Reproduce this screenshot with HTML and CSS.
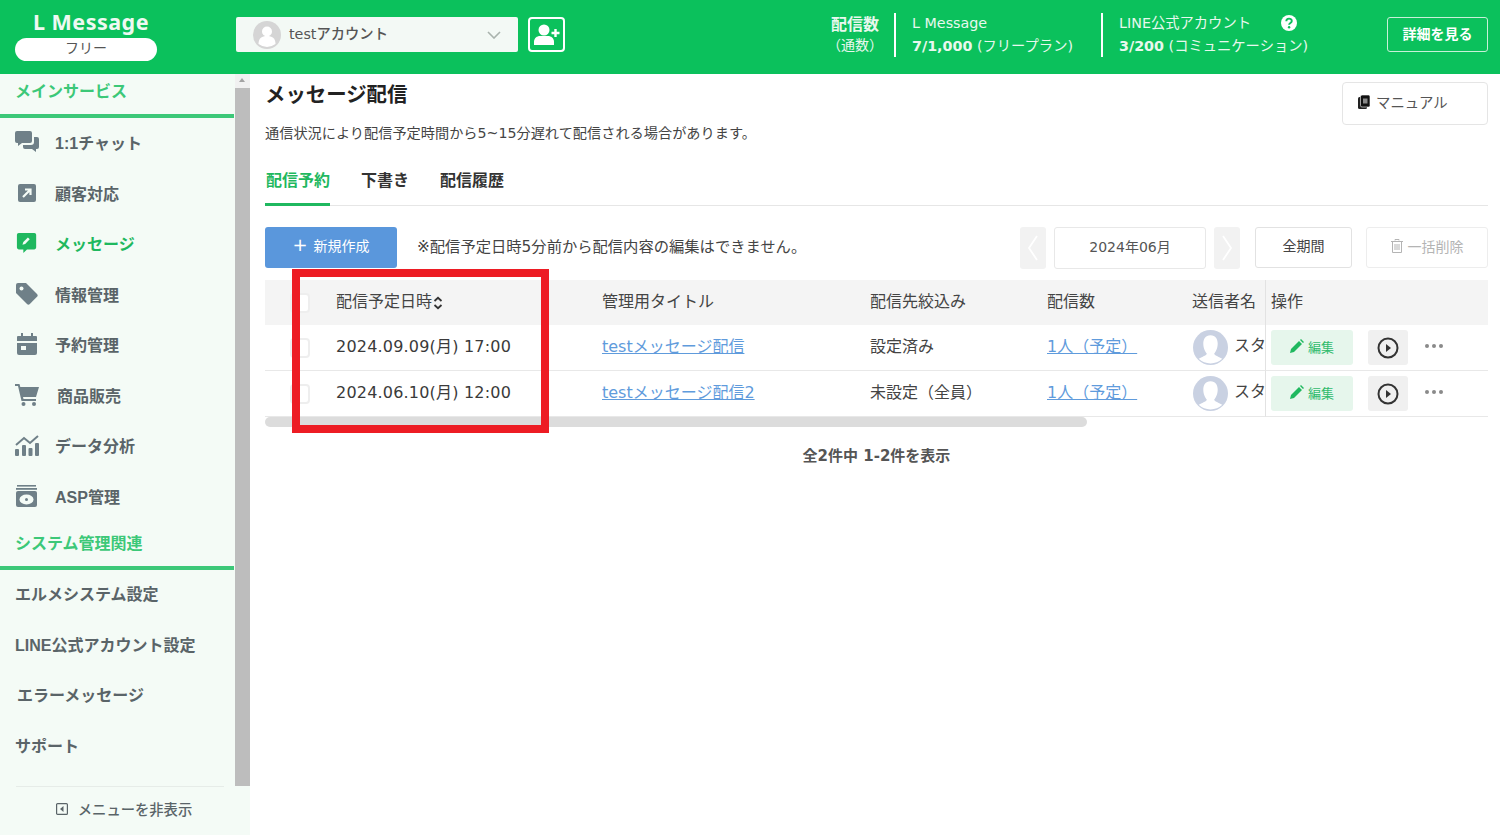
FILE: index.html
```html
<!DOCTYPE html>
<html lang="ja">
<head>
    <meta charset="UTF-8">
    <meta name="viewport" content="width=device-width, initial-scale=1.0">
    <title>メッセージ配信</title>
    <link rel="stylesheet" href="styles.css">
</head>
<body>

<header class="topbar">
    <div class="brand">
        <div class="brand-name">L Message</div>
        <div class="brand-plan">フリー</div>
    </div>
    <div class="account-select">
        <svg class="account-avatar" viewBox="0 0 28 28"><circle cx="14" cy="14" r="14" fill="#d5d5d5"/><circle cx="14" cy="10.5" r="5" fill="#fff"/><path d="M5.5 23c0-6 3.5-8 8.5-8s8.5 2 8.5 8a14 14 0 0 1-17 0z" fill="#fff"/></svg>
        <span class="account-name">testアカウント</span>
        <svg class="account-caret" viewBox="0 0 14 8"><path d="M1 1l6 6 6-6" fill="none" stroke="#a9b3ad" stroke-width="1.6"/></svg>
    </div>
    <div class="add-user">
        <svg viewBox="0 0 26 22" width="26" height="22"><circle cx="10" cy="6" r="5.5" fill="#fff"/><path d="M0 21v-3c0-4 3-6 6-6h8c3 0 6 2 6 6v3z" fill="#fff"/><path d="M21.5 5v8M17.5 9h8" stroke="#fff" stroke-width="2.4"/></svg>
    </div>
    <div class="stats">
        <div class="stat-label"><b>配信数</b><span>（通数）</span></div>
        <div class="stat stat-lm">
            <div>L Message</div>
            <div><b>7/1,000</b> (フリープラン)</div>
        </div>
        <div class="stat stat-line">
            <div class="stat-head">LINE公式アカウント
                <svg class="help" viewBox="0 0 16 16" width="16" height="16"><circle cx="8" cy="8" r="8" fill="#fff"/><path d="M5.3 6.2c0-3.4 5.5-3.4 5.5-.2 0 2-2.7 1.9-2.7 3.8" fill="none" stroke="#0bc15c" stroke-width="1.9"/><circle cx="8.1" cy="12.3" r="1.2" fill="#0bc15c"/></svg>
            </div>
            <div><b>3/200</b> (コミュニケーション)</div>
        </div>
    </div>
    <div class="detail-btn">詳細を見る</div>
</header>

<div class="layout">
    <aside class="sidebar">
        <div class="sidebar-body">
            <nav class="side-nav">
                <div class="side-section side-section-first">メインサービス</div>
                <div class="side-item">
                    <svg class="side-icon" viewBox="0 0 24 22"><path d="M2 0h13a2 2 0 0 1 2 2v8a2 2 0 0 1-2 2H7l-4 3v-3H2a2 2 0 0 1-2-2V2a2 2 0 0 1 2-2z"/><path d="M19 6h3a2 2 0 0 1 2 2v8a2 2 0 0 1-2 2h-1v3l-4-3H10a2 2 0 0 1-2-2v-2h8a3 3 0 0 0 3-3z"/></svg>
                    <span>1:1チャット</span>
                </div>
                <div class="side-item">
                    <svg class="side-icon" viewBox="0 0 22 22"><rect x="2" y="2" width="18" height="18" rx="2"/><path d="M7 15l7-7M9 7.5h5.5V13" fill="none" stroke="#f4fbf6" stroke-width="2.2"/></svg>
                    <span>顧客対応</span>
                </div>
                <div class="side-item side-item-active">
                    <svg class="side-icon" viewBox="0 0 22 24"><path d="M2 1h17a2 2 0 0 1 2 2v14a2 2 0 0 1-2 2h-8l-4 4v-4H2a2 2 0 0 1-2-2V3a2 2 0 0 1 2-2z"/><path d="M6 14l1-3 5-5 2 2-5 5z" fill="#f4fbf6"/></svg>
                    <span>メッセージ</span>
                </div>
                <div class="side-item">
                    <svg class="side-icon" viewBox="0 0 22 22"><path d="M0 2a2 2 0 0 1 2-2h8l11 11a2 2 0 0 1 0 2.8l-7.2 7.2a2 2 0 0 1-2.8 0L0 10z"/><circle cx="5.5" cy="5.5" r="2" fill="#f4fbf6"/></svg>
                    <span>情報管理</span>
                </div>
                <div class="side-item">
                    <svg class="side-icon" viewBox="0 0 22 22"><path d="M5 0h2v3h8V0h2v3h3a1 1 0 0 1 1 1v4H1V4a1 1 0 0 1 1-1h3z"/><path d="M1 10h20v10a2 2 0 0 1-2 2H3a2 2 0 0 1-2-2z"/><rect x="5" y="13" width="5" height="4" fill="#f4fbf6"/></svg>
                    <span>予約管理</span>
                </div>
                <div class="side-item side-item-shift">
                    <svg class="side-icon" viewBox="0 0 24 22"><path d="M0 0h4.5l.8 3H24l-3 10H8l.5 2H21v2H6.5L3 2H0z"/><circle cx="8.5" cy="20" r="2"/><circle cx="19" cy="20" r="2"/></svg>
                    <span>商品販売</span>
                </div>
                <div class="side-item">
                    <svg class="side-icon" viewBox="0 0 24 22"><rect x="0" y="15" width="4" height="7" rx="1"/><rect x="7" y="11" width="4" height="11" rx="1"/><rect x="13.5" y="14" width="4" height="8" rx="1"/><rect x="20" y="9" width="4" height="13" rx="1"/><path d="M1 11l8-7 6 5 8-7" fill="none" stroke="#6f8088" stroke-width="2"/></svg>
                    <span>データ分析</span>
                </div>
                <div class="side-item side-item-asp">
                    <svg class="side-icon" viewBox="0 0 22 22"><rect x="1" y="0" width="19" height="1.6"/><rect x="0" y="3" width="21" height="1.8"/><path d="M2 6h17a2 2 0 0 1 2 2v12a2 2 0 0 1-2 2H2a2 2 0 0 1-2-2V8a2 2 0 0 1 2-2z"/><ellipse cx="10.5" cy="14.5" rx="7" ry="5" fill="#f4fbf6"/><circle cx="10.5" cy="14.5" r="1.5"/></svg>
                    <span>ASP管理</span>
                </div>
                <div class="side-section">システム管理関連</div>
                <div class="side-item side-item-plain">エルメシステム設定</div>
                <div class="side-item side-item-plain">LINE公式アカウント設定</div>
                <div class="side-item side-item-plain side-item-err">エラーメッセージ</div>
                <div class="side-item side-item-plain">サポート</div>
            </nav>
            <div class="scrollbar-v">
                <div class="scrollbar-up"></div>
                <div class="scrollbar-thumb"></div>
            </div>
        </div>
        <div class="sidebar-foot">
            <div class="sidebar-foot-inner">
                <svg viewBox="0 0 12 12" width="12" height="12"><rect x=".6" y=".6" width="10.8" height="10.8" rx="1" fill="none" stroke="#5a6468" stroke-width="1.2"/><path d="M7.5 3v6L4 6z" fill="#5a6468"/></svg>
                <span>メニューを非表示</span>
            </div>
        </div>
    </aside>

    <main class="content">
        <div class="page-head">
            <div>
                <h1 class="page-title">メッセージ配信</h1>
                <p class="page-note">通信状況により配信予定時間から5~15分遅れて配信される場合があります。</p>
            </div>
            <div class="manual-btn">
                <svg viewBox="0 0 12 14" width="12" height="14"><rect x="0" y="2" width="9" height="12" rx="1.5" fill="#222"/><rect x="2.5" y="0" width="9.5" height="12" rx="1.5" fill="#111" stroke="#fff" stroke-width=".6"/><rect x="5" y="3.5" width="4.5" height="5" fill="#888"/></svg>
                <span>マニュアル</span>
            </div>
        </div>

        <div class="tabs">
            <div class="tab tab-active">配信予約</div>
            <div class="tab">下書き</div>
            <div class="tab">配信履歴</div>
        </div>

        <div class="toolbar">
            <div class="new-btn"><span class="new-plus">+</span>新規作成</div>
            <div class="toolbar-note">※配信予定日時5分前から配信内容の編集はできません。</div>
            <div class="toolbar-right">
                <div class="month-arrow">
                    <svg viewBox="0 0 12 30" width="12" height="30"><path d="M10 3L2 15l8 12" fill="none" stroke="#fff" stroke-width="1.8"/></svg>
                </div>
                <div class="month-box">2024年06月</div>
                <div class="month-arrow">
                    <svg viewBox="0 0 12 30" width="12" height="30"><path d="M2 3l8 12-8 12" fill="none" stroke="#fff" stroke-width="1.8"/></svg>
                </div>
                <div class="period-btn">全期間</div>
                <div class="bulk-btn">
                    <svg viewBox="0 0 12 14" width="12" height="14"><path d="M4 1.5V.5h4v1M0 2.5h12M1.5 2.5v11h9v-11M4 5v6M6 5v6M8 5v6" fill="none" stroke="#b4b4b4"/></svg>
                    <span>一括削除</span>
                </div>
            </div>
        </div>

        <div class="table-wrap">
            <table class="msg-table">
                <colgroup>
                    <col class="col-check"><col class="col-date"><col class="col-title"><col class="col-filter"><col class="col-count"><col class="col-sender"><col class="col-ops">
                </colgroup>
                <thead>
                    <tr>
                        <th><span class="check"></span></th>
                        <th>配信予定日時<svg class="sort" viewBox="0 0 10 14" width="10" height="14"><path d="M1.5 5L5 1.8 8.5 5M1.5 9L5 12.2 8.5 9" fill="none" stroke="#333" stroke-width="1.8"/></svg></th>
                        <th>管理用タイトル</th>
                        <th>配信先絞込み</th>
                        <th>配信数</th>
                        <th>送信者名</th>
                        <th class="ops-cell">操作</th>
                    </tr>
                </thead>
                <tbody>
                    <tr>
                        <td><span class="check"></span></td>
                        <td class="date-cell">2024.09.09(月) 17:00</td>
                        <td><a class="link">testメッセージ配信</a></td>
                        <td>設定済み</td>
                        <td><a class="link">1人（予定）</a></td>
                        <td>
                            <div class="sender">
                                <svg class="sender-avatar" viewBox="0 0 34 34"><circle cx="17" cy="17" r="17" fill="#c9d1e2"/><path d="M17 5c5 0 7 4 7 8 0 5-2 8-3.5 10 1 2 5 3 8 5a17 17 0 0 1-23 0c3-2 7-3 8-5C12 21 10 18 10 13c0-4 2-8 7-8z" fill="#fff"/></svg>
                                <span>スタ</span>
                            </div>
                        </td>
                        <td class="ops-cell">
                            <div class="ops">
                                <div class="edit-btn">
                                    <svg viewBox="0 0 14 14" width="14" height="14"><path d="M0 14l1-4 8-8 3 3-8 8zM10 1l1-1 3 3-1 1z" fill="#1fb85f"/></svg>
                                    <span>編集</span>
                                </div>
                                <div class="play-btn">
                                    <svg viewBox="0 0 22 22" width="22" height="22"><circle cx="11" cy="11" r="9.5" fill="none" stroke="#333" stroke-width="2"/><path d="M9 7l5 4-5 4z" fill="#333"/></svg>
                                </div>
                                <div class="more"><i></i><i></i><i></i></div>
                            </div>
                        </td>
                    </tr>
                    <tr>
                        <td><span class="check"></span></td>
                        <td class="date-cell">2024.06.10(月) 12:00</td>
                        <td><a class="link">testメッセージ配信2</a></td>
                        <td>未設定（全員）</td>
                        <td><a class="link">1人（予定）</a></td>
                        <td>
                            <div class="sender">
                                <svg class="sender-avatar" viewBox="0 0 34 34"><circle cx="17" cy="17" r="17" fill="#c9d1e2"/><path d="M17 5c5 0 7 4 7 8 0 5-2 8-3.5 10 1 2 5 3 8 5a17 17 0 0 1-23 0c3-2 7-3 8-5C12 21 10 18 10 13c0-4 2-8 7-8z" fill="#fff"/></svg>
                                <span>スタ</span>
                            </div>
                        </td>
                        <td class="ops-cell">
                            <div class="ops">
                                <div class="edit-btn">
                                    <svg viewBox="0 0 14 14" width="14" height="14"><path d="M0 14l1-4 8-8 3 3-8 8zM10 1l1-1 3 3-1 1z" fill="#1fb85f"/></svg>
                                    <span>編集</span>
                                </div>
                                <div class="play-btn">
                                    <svg viewBox="0 0 22 22" width="22" height="22"><circle cx="11" cy="11" r="9.5" fill="none" stroke="#333" stroke-width="2"/><path d="M9 7l5 4-5 4z" fill="#333"/></svg>
                                </div>
                                <div class="more"><i></i><i></i><i></i></div>
                            </div>
                        </td>
                    </tr>
                </tbody>
            </table>
            <div class="scrollbar-h"><div class="scrollbar-h-thumb"></div></div>
            <div class="red-box"></div>
        </div>

        <div class="table-count">全2件中 1-2件を表示</div>
    </main>
</div>

</body>
</html>
```

FILE: styles.css
```css
* {
    box-sizing: border-box;
}
body {
    margin: 0;
    height: 835px;
    overflow: hidden;
    font-family: "DejaVu Sans", "Noto Sans CJK JP", sans-serif;
    color: #333;
    background: #fff;
}

/* header */
.topbar {
    display: flex;
    align-items: center;
    height: 74px;
    padding-bottom: 5px;
    background: #0bc15c;
    color: #fff;
}
.brand {
    width: 142px;
    margin-left: 15px;
    margin-top: 5px;
    text-align: center;
}
.brand-name {
    padding-left: 10px;
    margin-top: -6px;
    font-family: "Noto Sans", sans-serif;
    font-size: 21.5px;
    font-weight: 700;
    line-height: 28px;
    color: #eef9f2;
    letter-spacing: .5px;
}
.brand-plan {
    height: 23px;
    margin-top: 2px;
    border-radius: 12px;
    background: #fff;
    color: #555;
    font-size: 14px;
    line-height: 20px;
}
.account-select {
    display: flex;
    align-items: center;
    width: 282px;
    height: 35px;
    margin-left: 79px;
    padding: 0 17px;
    border-radius: 2px;
    background: #f3f9f5;
    color: #555;
    font-size: 14.3px;
}
.account-avatar {
    width: 28px;
    height: 28px;
    flex: none;
}
.account-name {
    margin-left: 8px;
    margin-bottom: 4px;
    font-weight: 500;
}
.account-caret {
    width: 14px;
    height: 8px;
    margin-left: auto;
}
.add-user {
    display: flex;
    align-items: center;
    justify-content: center;
    width: 37px;
    height: 35px;
    margin-left: 10px;
    border: 2px solid #fff;
    border-radius: 4px;
}
.stats {
    display: flex;
    align-items: center;
    margin-left: 265px;
    font-size: 14.3px;
    color: #e8f8ee;
}
.stat-label {
    display: flex;
    flex-direction: column;
    align-items: center;
    width: 64px;
    padding-right: 14px;
    margin-top: 0;
    line-height: 21px;
}
.stat-label b {
    font-size: 16px;
}
.stat-label span {
    font-size: 14px;
    white-space: nowrap;
}
.stat {
    height: 44px;
    border-left: 2px solid #fff;
    padding-left: 16px;
    line-height: 23px;
    white-space: nowrap;
}
.stat > div:first-child {
    margin-top: -1px;
}
.stat-lm {
    width: 207px;
}
.stat-line {
    width: 285px;
}
.stat b {
    font-weight: 700;
}
.stat-head {
    display: flex;
    align-items: center;
    gap: 30px;
}
.help {
    flex: none;
}
.detail-btn {
    width: 101px;
    height: 35px;
    margin-left: auto;
    margin-right: 12px;
    border: 1px solid #c8f0d8;
    border-radius: 3px;
    text-align: center;
    font-size: 14px;
    font-weight: 700;
    line-height: 32px;
}

.layout {
    display: flex;
    height: 761px;
}

/* sidebar */
.sidebar {
    display: flex;
    flex-direction: column;
    flex: none;
    width: 250px;
    background: #f4fbf6;
}
.sidebar-body {
    display: flex;
    height: 712px;
}
.side-nav {
    flex: none;
    width: 234px;
    margin-right: 1px;
    font-family: "Liberation Sans", "Noto Sans CJK JP", sans-serif;
}
.side-section {
    height: 48px;
    padding: 10px 0 0 15px;
    border-bottom: 4px solid #3cc878;
    color: #3cc878;
    font-size: 16px;
    font-weight: 700;
    line-height: 24px;
}
.side-section-first {
    height: 44px;
    padding-top: 6px;
}
.side-item {
    display: flex;
    align-items: center;
    height: 50.5px;
    padding-left: 15px;
    padding-bottom: 2px;
    color: #5a6468;
    font-size: 16px;
    font-weight: 700;
}
.side-item > span {
    margin-left: 16px;
}
.side-icon {
    flex: none;
    width: 24px;
    height: 22px;
    fill: #6f8088;
}
.side-item-active {
    color: #1fb85f;
}
.side-item-active .side-icon {
    fill: #1fb85f;
}
.side-item-shift > span {
    margin-left: 18px;
}
.side-item-plain {
    padding-bottom: 4px;
}
.side-item-err {
    padding-left: 17px;
}
.scrollbar-v {
    flex: none;
    display: flex;
    flex-direction: column;
    width: 15px;
    background: #f1f1f1;
}
.scrollbar-up {
    height: 14px;
    position: relative;
}
.scrollbar-up::after {
    content: "";
    position: absolute;
    left: 4px;
    top: 4px;
    border-left: 3.5px solid transparent;
    border-right: 3.5px solid transparent;
    border-bottom: 4px solid #a3a3a3;
}
.scrollbar-thumb {
    flex: 1;
    background: #bdbdbd;
}
.sidebar-foot {
    flex: 1;
    padding: 0 26px 0 16px;
}
.sidebar-foot-inner {
    display: flex;
    align-items: center;
    justify-content: center;
    gap: 10px;
    height: 49px;
    padding-left: 8px;
    padding-bottom: 5px;
    border-top: 1px solid #e6ece8;
    color: #5a6468;
    font-size: 14.3px;
    font-weight: 500;
}

/* main column */
.content {
    flex: 1;
    min-width: 0;
    padding: 0 12px 0 15px;
}
.page-head {
    display: flex;
    justify-content: space-between;
    height: 84px;
}
.page-title {
    margin: 7px 0 0;
    color: #222;
    font-size: 20.4px;
    font-weight: 700;
    line-height: 29px;
}
.page-note {
    margin: 11px 0 0;
    color: #444;
    font-size: 14.2px;
    line-height: 24px;
}
.manual-btn {
    display: flex;
    align-items: center;
    gap: 6px;
    width: 146px;
    height: 43px;
    margin-top: 8px;
    padding-left: 15px;
    padding-bottom: 4px;
    border: 1px solid #e5e5e5;
    border-radius: 4px;
    color: #555;
    font-size: 14.4px;
}
.tabs {
    display: flex;
    gap: 31px;
    height: 48px;
    border-bottom: 1px solid #e6e6e6;
}
.tab {
    height: 48px;
    padding-top: 10px;
    color: #333;
    font-size: 16px;
    font-weight: 700;
    line-height: 26px;
}
.tab-active {
    border-bottom: 3px solid #1fb85f;
    color: #1fb85f;
    text-indent: 1px;
}
.toolbar {
    display: flex;
    align-items: center;
    height: 41px;
    margin-top: 21px;
}
.new-btn {
    width: 132px;
    height: 41px;
    border-radius: 3px;
    background: #5a97dc;
    color: #fff;
    text-align: center;
    font-size: 14px;
    line-height: 36px;
}
.new-plus {
    margin-right: 6px;
    font-size: 18px;
}
.toolbar-note {
    margin-left: 20px;
    margin-bottom: 5px;
    color: #444;
    font-size: 15.3px;
}
.toolbar-right {
    display: flex;
    align-items: center;
    margin-left: auto;
}
.month-arrow {
    display: flex;
    align-items: center;
    justify-content: center;
    width: 26px;
    height: 42px;
    border-radius: 3px;
    background: #f2f2f2;
}
.month-box {
    width: 152px;
    height: 42px;
    margin: 0 8px;
    border: 1px solid #e8e8e8;
    border-radius: 3px;
    color: #555;
    text-align: center;
    font-size: 14px;
    line-height: 38px;
}
.period-btn {
    width: 97px;
    height: 41px;
    margin-left: 15px;
    border: 1px solid #e2e2e2;
    border-radius: 3px;
    color: #444;
    text-align: center;
    font-size: 14px;
    line-height: 36px;
}
.bulk-btn {
    display: flex;
    align-items: center;
    justify-content: center;
    gap: 5px;
    width: 122px;
    height: 41px;
    margin-left: 14px;
    padding-bottom: 3px;
    border: 1px solid #ededed;
    border-radius: 3px;
    color: #b4b4b4;
    font-size: 14px;
}

/* table */
.table-wrap {
    position: relative;
    margin-top: 12px;
}
.msg-table {
    width: 100%;
    table-layout: fixed;
    border-collapse: separate;
    border-spacing: 0;
    font-size: 16px;
    color: #444;
}
.col-check { width: 71px; }
.col-date { width: 266px; }
.col-title { width: 268px; }
.col-filter { width: 177px; }
.col-count { width: 145px; }
.col-sender { width: 73px; }
.msg-table th {
    height: 45px;
    padding: 0 0 5px;
    background: #f4f4f4;
    text-align: left;
    font-weight: 400;
}
.msg-table td {
    height: 46px;
    padding: 0 0 5px;
    border-bottom: 1px solid #e8e8e8;
    white-space: nowrap;
}
.check {
    display: block;
    width: 20px;
    height: 20px;
    margin-left: 25px;
    margin-top: 5px;
    border: 2px solid #eee;
    border-radius: 4px;
    background: #fff;
}
.sort {
    margin-left: 1px;
    vertical-align: -3px;
}
.date-cell {
    letter-spacing: .2px;
    color: #3a3a3a;
}
.link {
    color: #5f9bdc;
    text-decoration: underline;
}
.sender {
    display: flex;
    align-items: center;
    gap: 6px;
}
.sender span {
    margin-bottom: 2px;
}
.sender-avatar {
    flex: none;
    width: 35px;
    height: 35px;
    margin-top: 5px;
    margin-left: 1px;
}
.ops-cell {
    border-left: 1px solid #e2e2e2;
    padding-left: 5px !important;
}
td.ops-cell {
    padding-bottom: 0 !important;
    vertical-align: top;
    padding-top: 5px !important;
}
.ops {
    display: flex;
    align-items: center;
    height: 35px;
}
.edit-btn {
    display: flex;
    align-items: center;
    justify-content: center;
    gap: 4px;
    width: 82px;
    height: 35px;
    padding-bottom: 3px;
    border-radius: 3px;
    background: #e6f6ec;
    color: #30bb6c;
    font-size: 13px;
}
.play-btn {
    display: flex;
    align-items: center;
    justify-content: center;
    width: 40px;
    height: 35px;
    margin-left: 15px;
    border-radius: 3px;
    background: #f0f0f0;
}
.more {
    display: flex;
    gap: 3px;
    margin-left: 17px;
    margin-top: -3px;
}
.more i {
    width: 4px;
    height: 4px;
    border-radius: 50%;
    background: #8a8a8a;
}
.scrollbar-h {
    height: 10px;
}
.scrollbar-h-thumb {
    width: 822px;
    height: 10px;
    border-radius: 5px;
    background: #dcdcdc;
}
.red-box {
    position: absolute;
    left: 27px;
    top: -11px;
    width: 257px;
    height: 164px;
    border: 8px solid #ed1c24;
}
.table-count {
    margin-top: 19px;
    width: 1223px;
    text-align: center;
    color: #555;
    font-size: 15px;
    font-weight: 700;
    line-height: 20px;
}
```
